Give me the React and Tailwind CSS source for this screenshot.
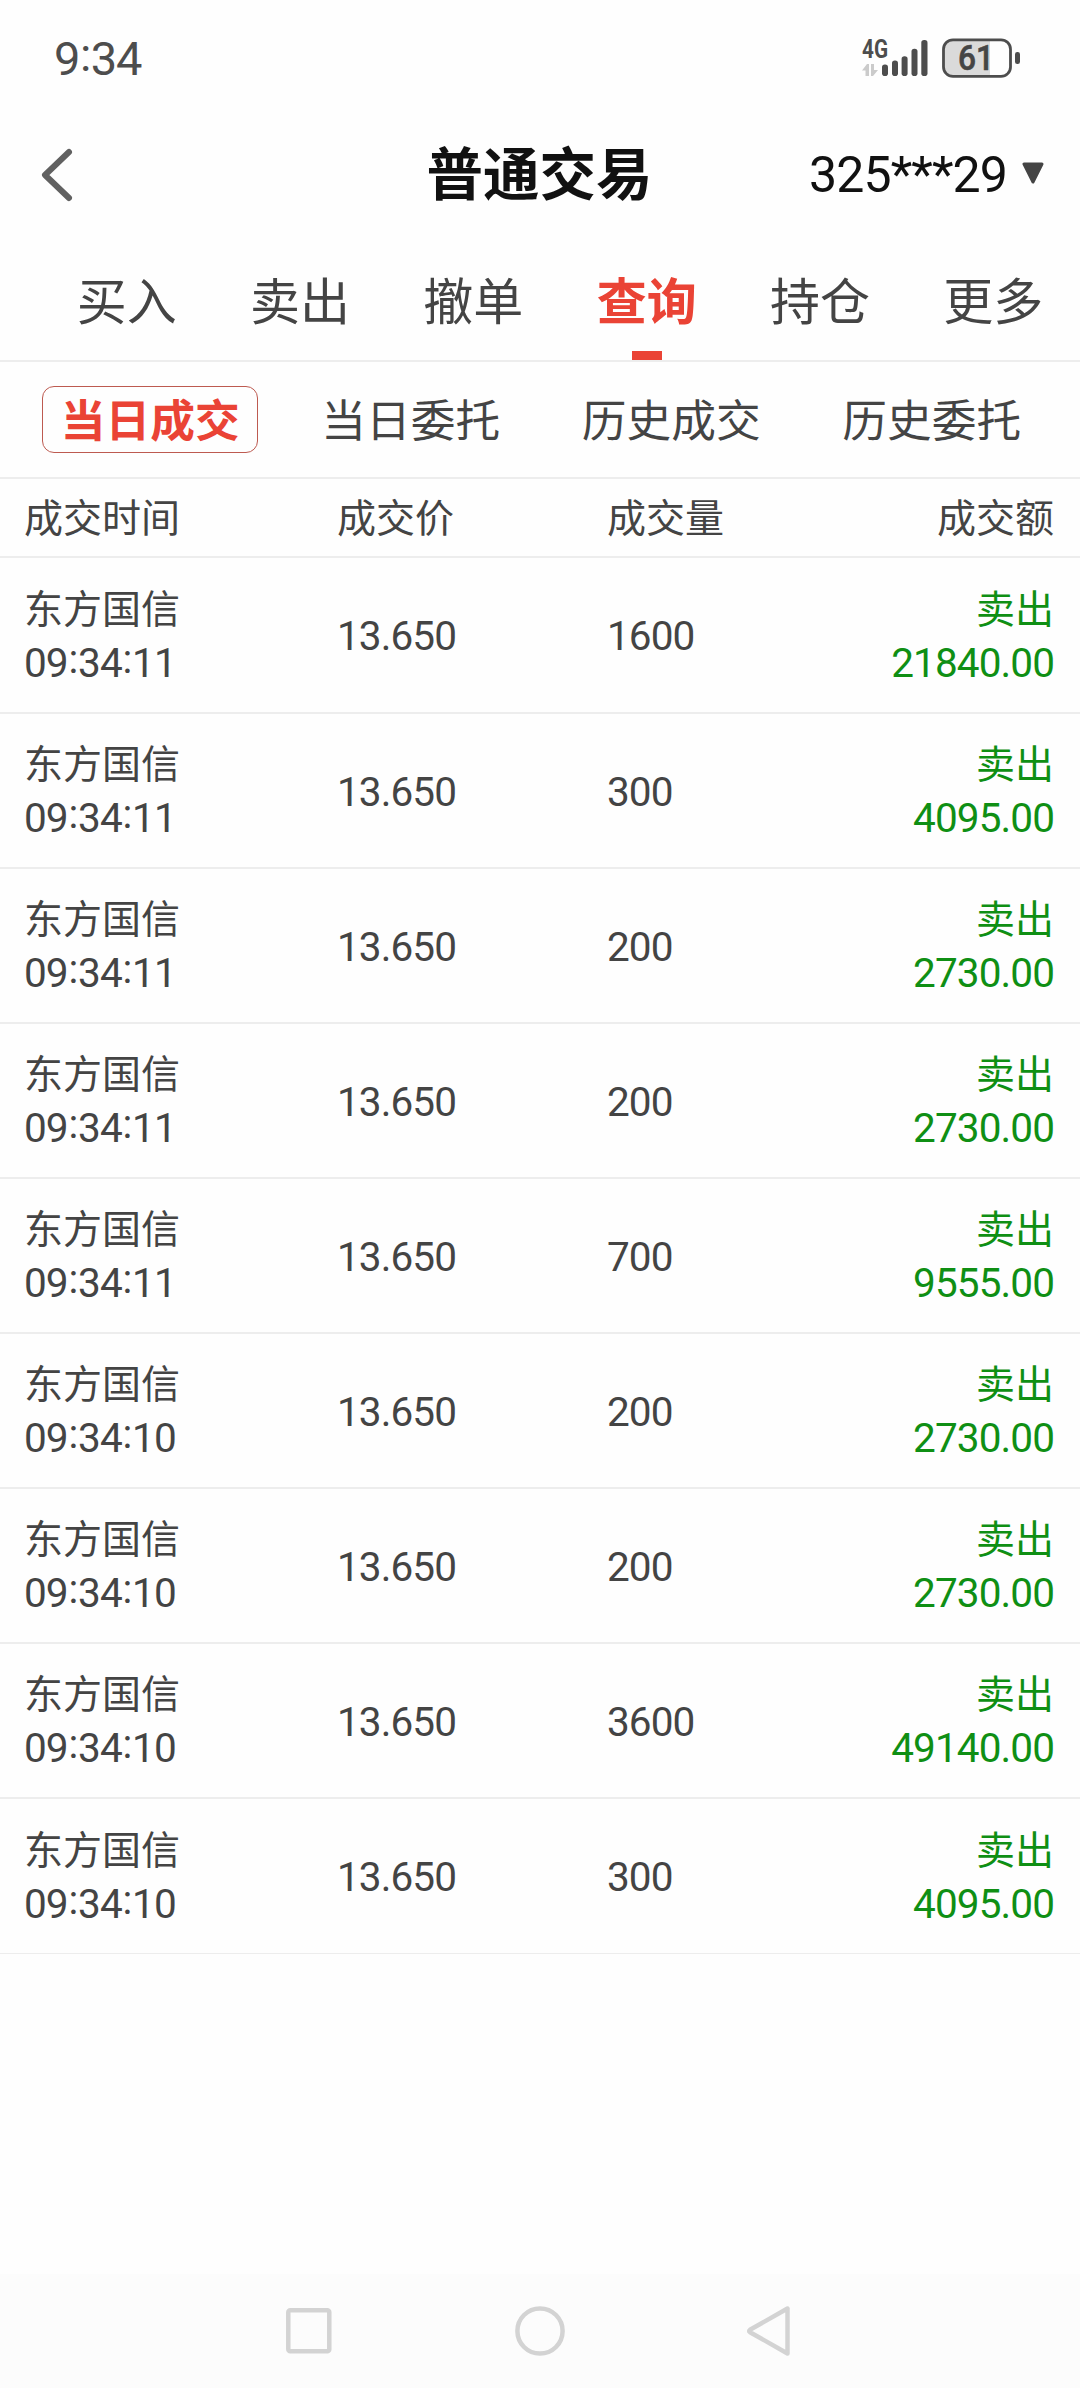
// src/App.jsx

import React from 'react';

const tabs = ['买入', '卖出', '撤单', '查询', '持仓', '更多'];
const subTabs = ['当日成交', '当日委托', '历史成交', '历史委托'];

const trades = [
  { name: '东方国信', time: '09:34:11', price: '13.650', qty: '1600', side: '卖出', amount: '21840.00' },
  { name: '东方国信', time: '09:34:11', price: '13.650', qty: '300', side: '卖出', amount: '4095.00' },
  { name: '东方国信', time: '09:34:11', price: '13.650', qty: '200', side: '卖出', amount: '2730.00' },
  { name: '东方国信', time: '09:34:11', price: '13.650', qty: '200', side: '卖出', amount: '2730.00' },
  { name: '东方国信', time: '09:34:11', price: '13.650', qty: '700', side: '卖出', amount: '9555.00' },
  { name: '东方国信', time: '09:34:10', price: '13.650', qty: '200', side: '卖出', amount: '2730.00' },
  { name: '东方国信', time: '09:34:10', price: '13.650', qty: '200', side: '卖出', amount: '2730.00' },
  { name: '东方国信', time: '09:34:10', price: '13.650', qty: '3600', side: '卖出', amount: '49140.00' },
  { name: '东方国信', time: '09:34:10', price: '13.650', qty: '300', side: '卖出', amount: '4095.00' },
];

// Colons sit at mid height of the digits
const Time = ({ value }) =>
  value.split(':').map((part, i) => (
    <React.Fragment key={i}>
      {i > 0 && <span className="relative -top-1 mx-[0.7px]">:</span>}
      {part}
    </React.Fragment>
  ));

const StatusBar = () => (
  <div className="flex h-[114px] items-center justify-between pl-[54px] pr-[59px] text-[#4d4d4d]">
    <span className="pt-[3px] text-[47px] leading-none tracking-[-1.2px]">
      <Time value="9:34" />
    </span>
    <svg width="160" height="54" viewBox="0 -7 160 54" className="mt-[1px]">
      <text x="1" y="20.3" fontSize="25.5" fontWeight="700" textLength="26" lengthAdjust="spacingAndGlyphs" fill="currentColor">4G</text>
      <path d="M1 32.500 L6 26 H8 V38 H4.500 V32.500 Z M10 26 H13 V32 H17 L12 38 H10 Z" fill="#cbcbcb" />
      <g fill="currentColor">
        <rect x="21" y="26.500" width="6" height="11.500" rx="2.800" />
        <rect x="31" y="22.500" width="6" height="15.500" rx="2.800" />
        <rect x="40.600" y="18.200" width="6" height="19.800" rx="2.800" />
        <rect x="50.500" y="10.800" width="6" height="27.200" rx="2.800" />
        <rect x="60.300" y="2" width="6.200" height="36" rx="2.800" />
      </g>
      <path d="M129 2 H91 a9 9 0 0 0 -9 9 V29 a9 9 0 0 0 9 9 H129 Z" fill="#dadada" />
      <rect x="82.500" y="1.800" width="67" height="36.600" rx="9.500" fill="none" stroke="currentColor" strokeWidth="2.800" />
      <rect x="154" y="14" width="5" height="12" rx="2.300" fill="currentColor" />
      <text x="97" y="32.200" fontSize="34.500" fontWeight="500" textLength="36" lengthAdjust="spacingAndGlyphs" fill="#454545" stroke="#454545" strokeWidth="0.600">61</text>
    </svg>
  </div>
);

const Header = () => (
  <div className="grid h-[122px] grid-cols-3 items-center pl-[35px] pr-[36px] text-[#111]">
    <svg width="46" height="56" viewBox="-5 0 46 56" fill="none" stroke="#616161" strokeWidth="6" strokeLinecap="round" strokeLinejoin="round">
      <path d="M29 5 L5 28 L29 51" />
    </svg>
    <h1 className="whitespace-nowrap pt-[3px] text-center text-[56.5px] font-bold leading-none">普通交易</h1>
    <div className="flex items-center justify-end gap-[15px]">
      <span className="text-[50px] leading-none tracking-[-0.9px]">325***29</span>
      <svg width="22" height="22" viewBox="0 0 22 22" fill="#444" stroke="#444" strokeWidth="3" strokeLinejoin="round" className="-mt-[4px]">
        <path d="M2 2 H20 L11 20 Z" />
      </svg>
    </div>
  </div>
);

const Tabs = () => (
  <div className="grid h-[126px] grid-cols-6 border-b-2 border-[#ededed] pl-[40px]">
    {tabs.map((tab) => (
      <div
        key={tab}
        className={
          tab === '查询'
            ? 'flex flex-col items-center justify-between pt-[42px] font-bold text-[#ea4335]'
            : 'flex flex-col items-center pt-[42px]'
        }
      >
        <span className="text-[50px] leading-none">{tab}</span>
        {tab === '查询' && <span className="h-[9px] w-[30px] bg-[#ea4335]" />}
      </div>
    ))}
  </div>
);

const SubTabs = () => (
  <div className="grid h-[117px] grid-cols-4 items-center border-b-2 border-[#ededed] pl-5 pr-[18px] text-[44.7px]">
    {subTabs.map((tab, i) => (
      <div key={tab} className="flex justify-center">
        <span
          className={
            i === 0
              ? 'flex h-[67px] w-[216px] items-center justify-center rounded-[12px] border border-[#bd5a50] pt-[5px] font-bold leading-none text-[#ea4335]'
              : 'pt-[5px] leading-none'
          }
        >
          {tab}
        </span>
      </div>
    ))}
  </div>
);

const NavBar = () => (
  <div className="flex h-[114px] items-center justify-center gap-[171px] bg-[#fcfcfc]">
    <svg width="60" height="60" viewBox="0 0 60 60" fill="none" stroke="#d3d3d3" strokeWidth="4.500">
      <rect x="9.300" y="9.300" width="41" height="41" rx="2" />
    </svg>
    <svg width="60" height="60" viewBox="0 0 60 60" fill="none" stroke="#d3d3d3" strokeWidth="4.500">
      <circle cx="30" cy="30" r="22.600" />
    </svg>
    <svg width="60" height="60" viewBox="0 0 60 60" fill="none" stroke="#d3d3d3" strokeWidth="4.500" strokeLinejoin="round">
      <path d="M46.500 7.500 V52.500 L9 31.200 Q7.300 30 9 28.800 Z" />
    </svg>
  </div>
);

const App = () => {
  return (
    <div className="flex h-[2388px] w-[1080px] flex-col overflow-hidden bg-[#fefefe] font-[Roboto,'Noto_Sans_CJK_SC',sans-serif] text-[#444]">
      <StatusBar />
      <Header />
      <Tabs />
      <SubTabs />
      <div className="grid h-[79px] grid-cols-[313px_270px_1fr_auto] items-center border-b-2 border-[#ededed] pl-6 pr-[26px] pt-1 text-[39px] leading-none">
        <span>成交时间</span>
        <span>成交价</span>
        <span>成交量</span>
        <span>成交额</span>
      </div>
      <div className="flex-1">
        {trades.map((t, i) => (
          <div
            key={i}
            className="grid h-[155px] grid-cols-[313px_270px_1fr_auto] items-center border-b-2 border-[#ededed] pl-6 pr-[26px] pt-[3px] text-[40.5px] leading-[53px] tracking-[-0.9px] first:h-[156px] last:border-b"
          >
            <div>
              <div className="text-[39px] tracking-normal">{t.name}</div>
              <div><Time value={t.time} /></div>
            </div>
            <span>{t.price}</span>
            <span>{t.qty}</span>
            <div className="text-right text-[#0f8f14]">
              <div className="text-[39px] tracking-normal">{t.side}</div>
              <div>{t.amount}</div>
            </div>
          </div>
        ))}
      </div>
      <NavBar />
    </div>
  );
};

export default App;
